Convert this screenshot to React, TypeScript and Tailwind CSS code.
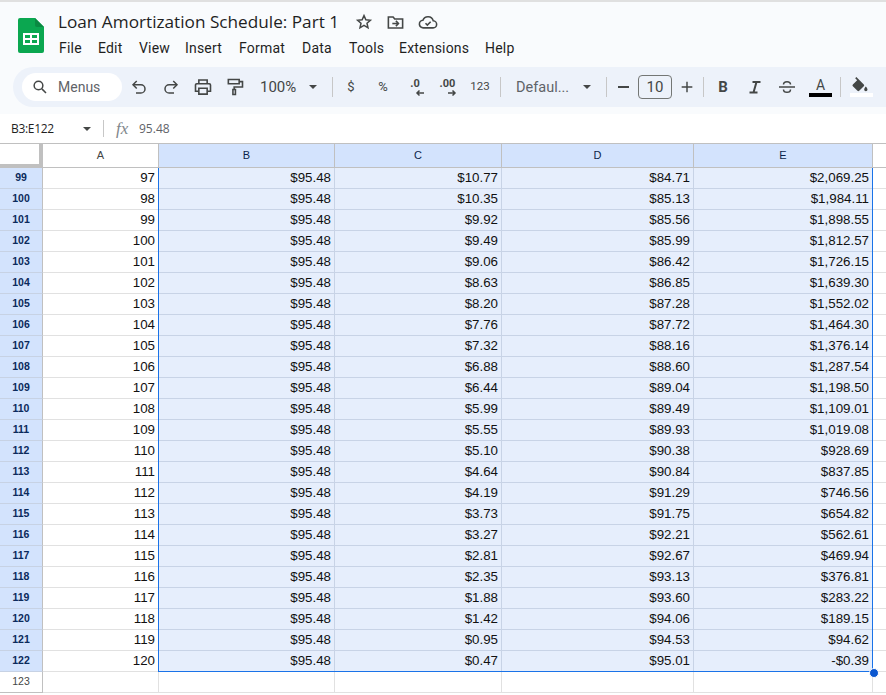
import React from "react";

const data: [number, string, string, string, string][] = [
  [97, "$95.48", "$10.77", "$84.71", "$2,069.25"],
  [98, "$95.48", "$10.35", "$85.13", "$1,984.11"],
  [99, "$95.48", "$9.92", "$85.56", "$1,898.55"],
  [100, "$95.48", "$9.49", "$85.99", "$1,812.57"],
  [101, "$95.48", "$9.06", "$86.42", "$1,726.15"],
  [102, "$95.48", "$8.63", "$86.85", "$1,639.30"],
  [103, "$95.48", "$8.20", "$87.28", "$1,552.02"],
  [104, "$95.48", "$7.76", "$87.72", "$1,464.30"],
  [105, "$95.48", "$7.32", "$88.16", "$1,376.14"],
  [106, "$95.48", "$6.88", "$88.60", "$1,287.54"],
  [107, "$95.48", "$6.44", "$89.04", "$1,198.50"],
  [108, "$95.48", "$5.99", "$89.49", "$1,109.01"],
  [109, "$95.48", "$5.55", "$89.93", "$1,019.08"],
  [110, "$95.48", "$5.10", "$90.38", "$928.69"],
  [111, "$95.48", "$4.64", "$90.84", "$837.85"],
  [112, "$95.48", "$4.19", "$91.29", "$746.56"],
  [113, "$95.48", "$3.73", "$91.75", "$654.82"],
  [114, "$95.48", "$3.27", "$92.21", "$562.61"],
  [115, "$95.48", "$2.81", "$92.67", "$469.94"],
  [116, "$95.48", "$2.35", "$93.13", "$376.81"],
  [117, "$95.48", "$1.88", "$93.60", "$283.22"],
  [118, "$95.48", "$1.42", "$94.06", "$189.15"],
  [119, "$95.48", "$0.95", "$94.53", "$94.62"],
  [120, "$95.48", "$0.47", "$95.01", "-$0.39"],
];

const Stroke = ({ children, size = 18, className = "", sw = 2 }: { children: React.ReactNode; size?: number; className?: string; sw?: number }) => (
  <svg width={size} height={size} viewBox="0 0 24 24" fill="none" stroke="#444746" strokeWidth={sw} className={`shrink-0 ${className}`}>
    {children}
  </svg>
);

const Sep = () => <div className="w-px h-5 bg-[#c7c7c7] shrink-0" />;

const Caret = () => <div className="w-0 h-0 border-l-[4px] border-r-[4px] border-t-[4px] border-l-transparent border-r-transparent border-t-[#444746]" />;

const selCell = "bg-[#e6eefc] border-r border-b border-[#c8d3e6] flex items-center justify-end pr-[3px]";
const plainCell = "bg-white border-r border-b border-[#e1e1e1] flex items-center justify-end pr-[3px]";

export default function App() {
  return (
    <div className="w-[886px] h-[695px] overflow-hidden bg-white relative font-['Roboto',sans-serif] text-[#444746]">
      <div className="h-[114px] bg-[#f9fbfd] border-t-2 border-[#e0e0e0] flex flex-col">
        <div className="h-[65px] flex shrink-0">
          <div className="w-[59px] shrink-0 pl-[18px] pt-[16px]">
            <svg width="26" height="35" viewBox="0 0 26 35">
              <path d="M2 0H17L26 9V33a2 2 0 0 1-2 2H2a2 2 0 0 1-2-2V2a2 2 0 0 1 2-2Z" fill="#0ba750" />
              <path d="M17 0L26 9H19a2 2 0 0 1-2-2Z" fill="#0a8a42" />
              <path d="M5 15H21V27H5ZM7 17V20H12V17ZM14 17V20H19V17ZM7 22V25H12V22ZM14 22V25H19V22Z" fill="#fff" fillRule="evenodd" />
            </svg>
          </div>
          <div className="flex flex-col">
            <div className="flex items-center h-[22px] mt-[9px]">
              <span className="text-[17.2px] leading-[22px] text-[#1f1f1f] font-['Open_Sans',sans-serif] w-[297px] -ml-px whitespace-nowrap">Loan Amortization Schedule: Part 1</span>
              <Stroke size={18} sw={2}><path d="M12 3.500l2.500 5.600 6 .6-4.500 4 1.300 6L12 16.600l-5.300 3.100 1.300-6-4.500-4 6-.6Z" /></Stroke>
              <Stroke size={19} sw={2} className="ml-[13px]"><path d="M3 5h6l2 2.500h10V19H3Z" /><path d="M8 13.300h7" /><path d="M12.500 10l3.200 3.300-3.200 3.300" /></Stroke>
              <Stroke size={20} sw={1.9} className="ml-[13px]"><path d="M6.500 19a4.500 4.500 0 0 1-.6-9A6.500 6.500 0 0 1 18.300 10.600 4.200 4.200 0 0 1 18 19Z" /><path d="M9 13.500l2.200 2.200 4-4" /></Stroke>
            </div>
            <div className="flex text-[14px] leading-[20px] text-[#1f1f1f] mt-[5px] gap-[14px]">
              {[["File", 25], ["Edit", 27], ["View", 32], ["Insert", 40], ["Format", 49], ["Data", 33], ["Tools", 36], ["Extensions", 72], ["Help", 31]].map(([m, w]) => (
                <span key={m as string} style={{ width: w as number }} className="whitespace-nowrap tracking-[0.2px]">{m}</span>
              ))}
            </div>
          </div>
        </div>
        <div className="h-[40px] ml-[13px] rounded-l-[20px] bg-[#edf2fa] flex items-center text-[#444746]">
          <div className="ml-[9px] w-[100px] h-[28px] rounded-full bg-white flex items-center pl-[9px] gap-[9px] shrink-0">
            <Stroke size={18} sw={2}><circle cx="10" cy="10" r="5.800" /><path d="M14.500 14.500 20 20" /></Stroke>
            <span className="text-[14px] text-[#5f6368]">Menus</span>
          </div>
          <Stroke size={18} sw={2} className="ml-[8px]"><path d="M9 14 4 9l5-5" /><path d="M4 9h10.500a5.500 5.500 0 0 1 0 11H8" /></Stroke>
          <Stroke size={18} sw={2} className="ml-[14px]"><path d="M15 14l5-5-5-5" /><path d="M20 9H9.500a5.500 5.500 0 0 0 0 11H16" /></Stroke>
          <Stroke size={20} sw={1.9} className="ml-[13px]"><path d="M7 8V3.500h10V8" /><path d="M7 17H3v-7.500A1.500 1.500 0 0 1 4.500 8h15A1.500 1.500 0 0 1 21 9.500V17h-4" /><path d="M7 13.500h10v7H7Z" /></Stroke>
          <Stroke size={20} sw={1.9} className="ml-[12px]"><path d="M4 3h13v5H4Z" /><path d="M17 5.500h4V12H11v3" /><path d="M9.500 15h3v6h-3Z" /></Stroke>
          <span className="ml-[15px] pt-px text-[15px] w-[44px]">100%</span>
          <div className="ml-[5px]"><Caret /></div>
          <div className="ml-[15px]"><Sep /></div>
          <span className="ml-[13px] text-[13px] w-[10px] text-center">$</span>
          <span className="ml-[20px] text-[13px] w-[14px] text-center">%</span>
          <div className="ml-[15px] w-[20px] relative h-[20px] text-[11px] font-bold leading-[14px] text-center">
            .0
            <svg className="absolute left-[10px] top-[12px]" width="10" height="8" viewBox="0 0 10 8" fill="none" stroke="#444746" strokeWidth="1.500"><path d="M9 4H2M4.500 1.500L2 4l2.500 2.500" /></svg>
          </div>
          <div className="ml-[12px] w-[21px] relative h-[20px] text-[11px] font-bold leading-[14px] text-center">
            .00
            <svg className="absolute left-[10px] top-[12px]" width="10" height="8" viewBox="0 0 10 8" fill="none" stroke="#444746" strokeWidth="1.500"><path d="M1 4h7M5.500 1.500L8 4 5.500 6.500" /></svg>
          </div>
          <span className="ml-[12px] text-[11.500px] w-[20px] text-center">123</span>
          <div className="ml-[10px]"><Sep /></div>
          <span className="ml-[15px] pt-px text-[14.500px] w-[54px] whitespace-nowrap text-[#5f6368]">Defaul...</span>
          <div className="ml-[13px]"><Caret /></div>
          <div className="ml-[15px]"><Sep /></div>
          <div className="ml-[11px] w-[11px] h-[1.500px] bg-[#444746] shrink-0" />
          <div className="ml-[9px] w-[34px] h-[24px] shrink-0 border border-[#747775] rounded-[4px] flex items-center justify-center text-[15px]">10</div>
          <Stroke size={16} sw={2.2} className="ml-[7px]"><path d="M12 4v16M4 12h16" /></Stroke>
          <div className="ml-[8px]"><Sep /></div>
          <span className="ml-[13px] w-[12px] text-center text-[15px] font-bold">B</span>
          <svg className="ml-[19px] shrink-0" width="14" height="14" viewBox="0 0 14 14" fill="none" stroke="#444746" strokeWidth="2"><path d="M4.500 2h8M1.500 12.500h8M8.500 2l-3 10.500" /></svg>
          <svg className="ml-[16px] shrink-0" width="18" height="18" viewBox="0 0 18 18" fill="none" stroke="#444746" strokeWidth="1.500"><path d="M1 9h16" /><path d="M5.500 6.500C5.500 4.800 7 3.700 9 3.700s3.500 1.100 3.500 2.800" /><path d="M12.500 11.500c0 1.700-1.500 2.800-3.500 2.800s-3.500-1.100-3.500-2.800" /></svg>
          <div className="ml-[13px] w-[23px] h-[20px] flex flex-col items-center relative shrink-0">
            <span className="text-[14px] leading-[16px]">A</span>
            <div className="absolute bottom-0 left-0 right-0 h-[4px] bg-black" />
          </div>
          <div className="ml-[8px]"><Sep /></div>
          <div className="ml-[9px] w-[23px] h-[24px] mb-[4px] relative shrink-0">
            <svg className="absolute left-[0px] top-[4px]" width="20" height="20" viewBox="0 0 24 24" fill="#444746"><path d="M16.560 8.940L7.620 0 6.210 1.410l2.380 2.380-5.150 5.150a1.500 1.500 0 0 0 0 2.120l5.500 5.500a1.500 1.500 0 0 0 2.120 0l5.500-5.500a1.500 1.500 0 0 0 0-2.120ZM19 11.500s-2 2.170-2 3.500a2 2 0 0 0 4 0c0-1.330-2-3.500-2-3.500Z" /></svg>
            <div className="absolute bottom-0 left-0 right-0 h-[4px] bg-white" />
          </div>
        </div>
      </div>

      <div className="h-[29px] bg-white flex items-center text-[12px]">
        <span className="ml-[11px] w-[69px] text-[12px] text-[#1f1f1f] font-['Open_Sans',sans-serif] tracking-[-0.3px]">B3:E122</span>
        <div className="ml-[3px]"><Caret /></div>
        <div className="ml-[12px] w-px h-[17px] bg-[#c7c7c7]" />
        <span className="ml-[12px] w-[17px] font-['Liberation_Serif',serif] italic text-[17px] leading-none text-[#80868b]">fx</span>
        <span className="ml-[6px] text-[12px] text-[#5f6368] font-['Open_Sans',sans-serif]">95.48</span>
      </div>

      <div className="relative font-['Liberation_Sans',sans-serif] text-[13.330px] text-[#111]">
        <div className="flex h-[25px] text-[11px] text-[#444746] border-t border-[#c0c0c0]">
          <div className="w-[43px] shrink-0 bg-white border-r-[4px] border-b-[4px] border-[#c0c0c0]" />
          <div className="w-[116px] shrink-0 bg-white border-r border-b border-[#c0c0c0] flex items-center justify-center">A</div>
          {[["B", 176], ["C", 167], ["D", 192], ["E", 179]].map(([c, w]) => (
            <div key={c as string} style={{ width: w as number }} className="shrink-0 bg-[#d3e3fd] border-r border-b border-[#c0c0c0] flex items-center justify-center text-[#0b1f4a]">{c}</div>
          ))}
          <div className="flex-1 bg-white border-b border-[#c0c0c0]" />
        </div>
        {data.map((r, i) => (
          <div key={r[0]} className="flex h-[21px]">
            <div className="w-[43px] shrink-0 bg-[#d3e3fd] border-r border-b border-r-[#c0c0c0] border-b-[#c7d2e4] flex items-center justify-center text-[10.500px] font-bold text-[#0b2a5c]">{i + 99}</div>
            <div className={`w-[116px] shrink-0 ${plainCell}`}>{r[0]}</div>
            <div className={`w-[176px] shrink-0 ${selCell}`}>{r[1]}</div>
            <div className={`w-[167px] shrink-0 ${selCell}`}>{r[2]}</div>
            <div className={`w-[192px] shrink-0 ${selCell}`}>{r[3]}</div>
            <div className={`w-[179px] shrink-0 ${selCell}`}>{r[4]}</div>
            <div className="flex-1 bg-white border-b border-[#e1e1e1]" />
          </div>
        ))}
        <div className="flex h-[21px]">
          <div className="w-[43px] shrink-0 bg-white border-r border-b border-r-[#c0c0c0] border-b-[#c0c0c0] flex items-center justify-center text-[10.500px] text-[#444746]">123</div>
          {[116, 176, 167, 192, 179].map((w) => (
            <div key={w} style={{ width: w }} className="shrink-0 border-r border-b border-[#e1e1e1]" />
          ))}
          <div className="flex-1 border-b border-[#e1e1e1]" />
        </div>
        <div className="absolute left-[158px] top-[25px] w-[715px] h-[504px] border-l border-r border-b border-[#1a73e8] pointer-events-none" />
        <div className="absolute left-[869px] top-[525px] w-[8px] h-[8px] rounded-full bg-[#0b57d0] border border-white box-content" />
      </div>
    </div>
  );
}
